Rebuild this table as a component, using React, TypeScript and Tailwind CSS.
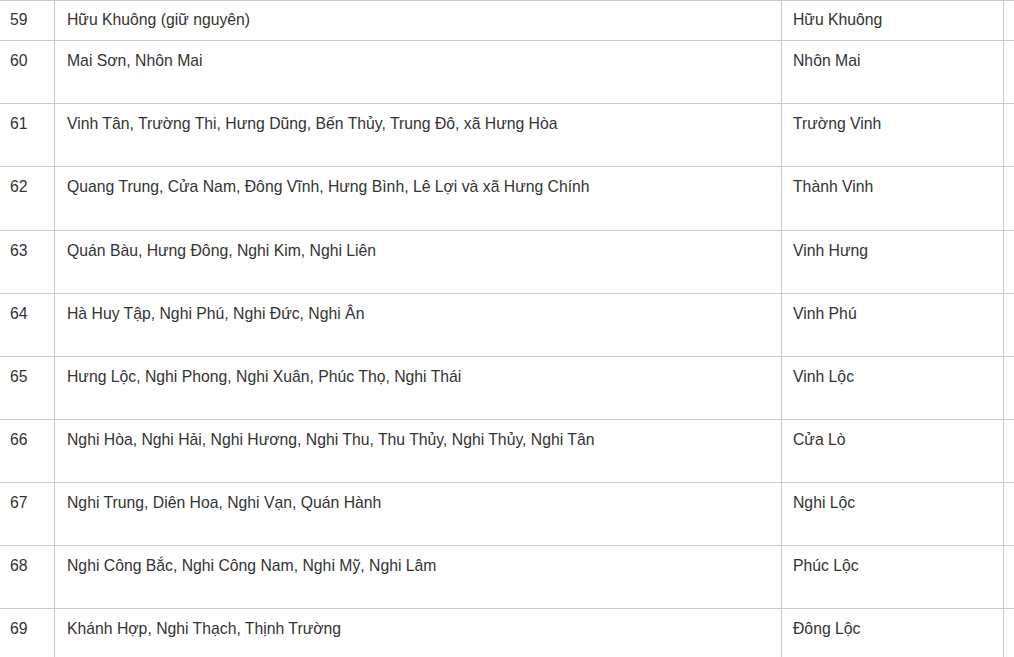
const rows: { no: string; old: string; name: string; first?: boolean }[] = [
  { no: '59', old: 'Hữu Khuông (giữ nguyên)', name: 'Hữu Khuông', first: true },
  { no: '60', old: 'Mai Sơn, Nhôn Mai', name: 'Nhôn Mai' },
  { no: '61', old: 'Vinh Tân, Trường Thi, Hưng Dũng, Bến Thủy, Trung Đô, xã Hưng Hòa', name: 'Trường Vinh' },
  { no: '62', old: 'Quang Trung, Cửa Nam, Đông Vĩnh, Hưng Bình, Lê Lợi và xã Hưng Chính', name: 'Thành Vinh' },
  { no: '63', old: 'Quán Bàu, Hưng Đông, Nghi Kim, Nghi Liên', name: 'Vinh Hưng' },
  { no: '64', old: 'Hà Huy Tập, Nghi Phú, Nghi Đức, Nghi Ân', name: 'Vinh Phú' },
  { no: '65', old: 'Hưng Lộc, Nghi Phong, Nghi Xuân, Phúc Thọ, Nghi Thái', name: 'Vinh Lộc' },
  { no: '66', old: 'Nghi Hòa, Nghi Hải, Nghi Hương, Nghi Thu, Thu Thủy, Nghi Thủy, Nghi Tân', name: 'Cửa Lò' },
  { no: '67', old: 'Nghi Trung, Diên Hoa, Nghi Vạn, Quán Hành', name: 'Nghi Lộc' },
  { no: '68', old: 'Nghi Công Bắc, Nghi Công Nam, Nghi Mỹ, Nghi Lâm', name: 'Phúc Lộc' },
  { no: '69', old: 'Khánh Hợp, Nghi Thạch, Thịnh Trường', name: 'Đông Lộc' },
];

export default function App() {
  return (
    <div className="w-[1014px] h-[657px] overflow-hidden bg-white font-['Liberation_Sans',Arial,sans-serif] text-[15.75px] leading-[22px] text-[#333]">
      <div className="border-t border-[#cccccc] w-[1100px]">
        {rows.map(r => {
          const h = r.first ? 'h-[40px]' : r.no === '62' ? 'h-[64px]' : 'h-[63px]';
          const pt = r.first ? 'pt-[8px]' : 'pt-[9px]';
          return (
            <div key={r.no} className={`flex border-b border-[#cccccc] ${h}`}>
              <div className={`w-[54px] shrink-0 pl-[10px] ${pt}`}>{r.no}</div>
              <div className={`w-[727px] shrink-0 border-l border-[#cccccc] pl-[12px] ${pt}`}>{r.old}</div>
              <div className={`w-[222px] shrink-0 border-l border-[#cccccc] pl-[11px] ${pt}`}>{r.name}</div>
              <div className="flex-1 border-l border-[#cccccc]" />
            </div>
          );
        })}
      </div>
    </div>
  );
}
